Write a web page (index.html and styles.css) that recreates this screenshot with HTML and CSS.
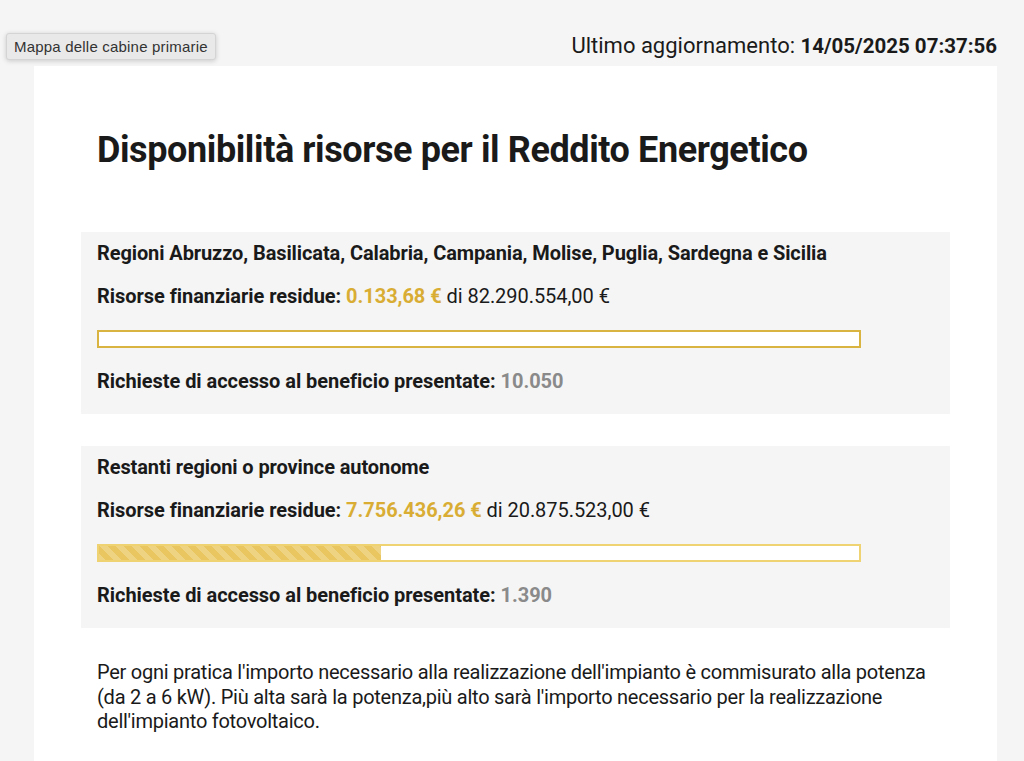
FILE: index.html
```html
<!DOCTYPE html>
<html lang="it">
<head>
<meta charset="utf-8">
<title>Disponibilità risorse per il Reddito Energetico</title>
<link rel="stylesheet" href="styles.css">
</head>
<body>
<header class="topbar">
  <button class="map-btn" type="button">Mappa delle cabine primarie</button>
  <div class="updated">Ultimo aggiornamento: <strong>14/05/2025 07:37:56</strong></div>
</header>
<main class="card">
  <h1 class="title">Disponibilità risorse per il Reddito Energetico</h1>

  <section class="box">
    <h2 class="box-title">Regioni Abruzzo, Basilicata, Calabria, Campania, Molise, Puglia, Sardegna e Sicilia</h2>
    <p class="line"><strong>Risorse finanziarie residue:</strong> <span class="amount">0.133,68 €</span> di 82.290.554,00 €</p>
    <div class="bar bar-dark"><div class="fill" style="width:0%"></div></div>
    <p class="line"><strong>Richieste di accesso al beneficio presentate:</strong> <span class="count">10.050</span></p>
  </section>

  <section class="box">
    <h2 class="box-title">Restanti regioni o province autonome</h2>
    <p class="line"><strong>Risorse finanziarie residue:</strong> <span class="amount">7.756.436,26 €</span> di 20.875.523,00 €</p>
    <div class="bar bar-light"><div class="fill" style="width:37.15%"></div></div>
    <p class="line"><strong>Richieste di accesso al beneficio presentate:</strong> <span class="count">1.390</span></p>
  </section>

  <p class="note">Per ogni pratica l'importo necessario alla realizzazione dell'impianto è commisurato alla potenza (da 2 a 6 kW). Più alta sarà la potenza,più alto sarà l'importo necessario per la realizzazione dell'impianto fotovoltaico.</p>
</main>
</body>
</html>
```
FILE: styles.css
```css
html, body {
  margin: 0;
  padding: 0;
}
body {
  background: #f5f5f5;
  color: #1a1a1a;
  font-family: Roboto, "Liberation Sans", sans-serif;
}
.topbar {
  display: flex;
  justify-content: space-between;
  align-items: flex-start;
  height: 66px;
  padding: 0 27px 0 6px;
}
.map-btn {
  margin-top: 33px;
  height: 27px;
  padding: 0 7px;
  font-family: "Liberation Sans", Arial, sans-serif;
  font-size: 15px;
  letter-spacing: 0.2px;
  color: #333;
  background: #e9e9e9;
  border: 1px solid #d4d4d4;
  border-radius: 3px;
  box-shadow: 0 1px 5px rgba(0,0,0,0.18);
}
.updated {
  margin-top: 31px;
  font-size: 22px;
  line-height: 30px;
  color: #1a1a1a;
}
.updated strong {
  font-weight: 700;
  font-size: 20.5px;
}
.card {
  margin-left: 34px;
  width: 963px;
  background: #fff;
  padding: 62px 47px 40px;
  box-sizing: border-box;
  min-height: 695px;
}
.title {
  margin: 0 0 60px 16px;
  font-size: 36px;
  line-height: 44px;
  font-weight: 700;
  letter-spacing: -0.4px;
  color: #1a1a1a;
}
.box {
  background: #f5f5f5;
  padding: 9px 16px 21px;
  margin-bottom: 32px;
}
.box-title {
  margin: 0;
  font-size: 20px;
  line-height: 24px;
  font-weight: 700;
  letter-spacing: -0.1px;
}
.line {
  margin: 19px 0 0;
  font-size: 20px;
  line-height: 24px;
  letter-spacing: -0.05px;
}
.line strong {
  font-weight: 700;
}
.bar + .line {
  margin-top: 21px;
}
.amount {
  color: #d9ad34;
  font-weight: 700;
}
.count {
  color: #8a8a8a;
  font-weight: 700;
}
.bar {
  margin-top: 22px;
  width: 764px;
  height: 18px;
  box-sizing: border-box;
  background: #fff;
  border: 2px solid #d9b440;
}
.bar-light {
  border-color: #efd271;
}
.fill {
  height: 100%;
  background-color: #e9c660;
  background-image: linear-gradient(45deg, rgba(255,255,255,0.22) 25%, transparent 25%, transparent 50%, rgba(255,255,255,0.22) 50%, rgba(255,255,255,0.22) 75%, transparent 75%, transparent);
  background-size: 16px 16px;
}
.note {
  margin: 31px 0 0 16px;
  font-size: 20px;
  line-height: 24.5px;
  color: #1a1a1a;
  letter-spacing: -0.25px;
  max-width: 840px;
}
```
